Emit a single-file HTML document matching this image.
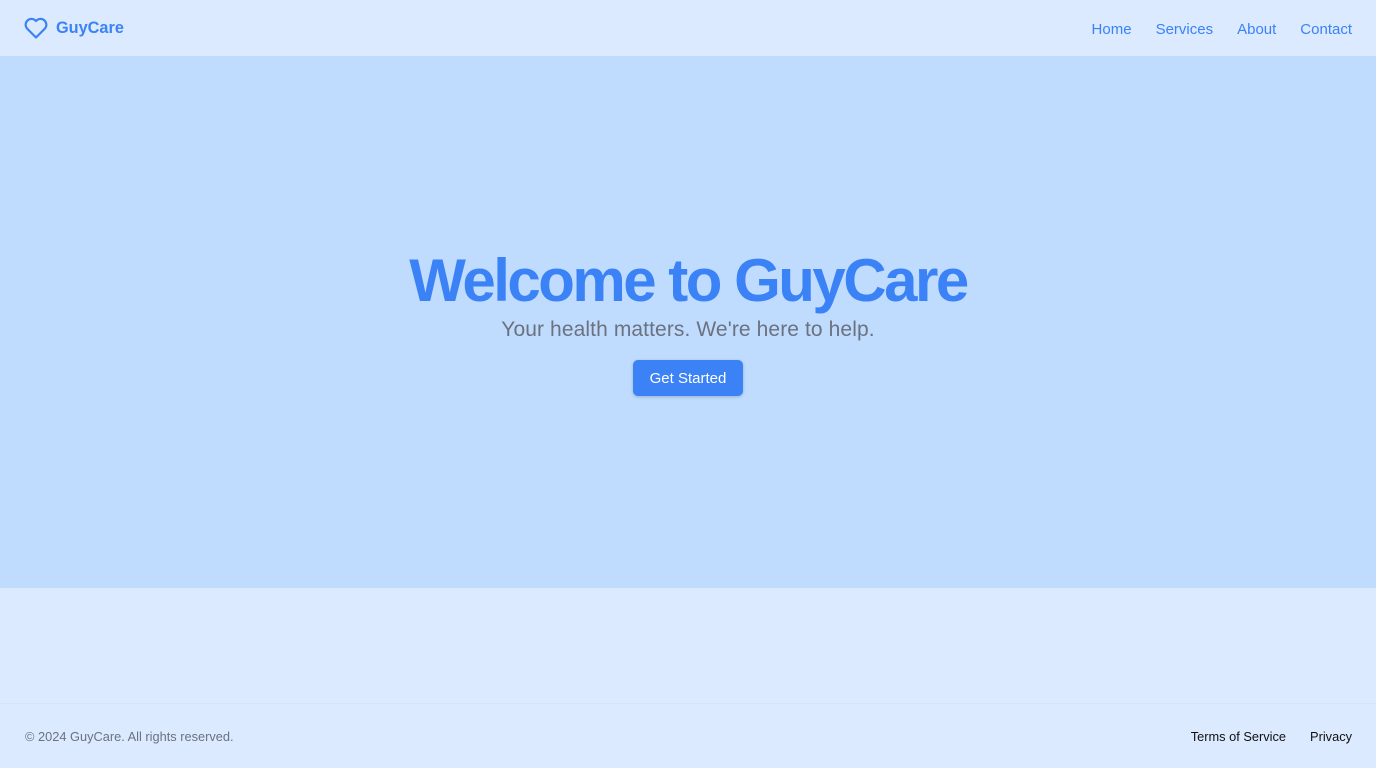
<!DOCTYPE html>
<html><head><style>
*{margin:0;padding:0;box-sizing:border-box}
body{width:1376px;height:768px;background:#dbeafe;font-family:"Liberation Sans",sans-serif;position:relative;overflow:hidden}
header{height:56px;display:flex;align-items:center;justify-content:space-between;padding:0 24px}
.logo{display:flex;align-items:center;gap:8px;color:#3b82f6;font-weight:bold;font-size:16.3px}
nav{padding-top:3px}
nav a{color:#3b82f6;text-decoration:none;font-size:15px;margin-left:24px}
.hero{position:absolute;top:56px;left:0;width:1376px;height:532px;background:#bfdbfe;text-align:center}
h1{position:absolute;top:190px;width:100%;font-size:60px;letter-spacing:-2.5px;color:#3b82f6;font-weight:bold}
.sub{position:absolute;top:262px;width:100%;font-size:21px;color:#6b7280;letter-spacing:0.1px}
.btn{position:absolute;top:304px;left:633px;width:110px;height:36px;background:#3b82f6;color:#fff;border-radius:5px;font-size:15px;line-height:38px;box-shadow:0 1px 3px rgba(0,0,0,.2)}
footer{position:absolute;top:703px;left:0;width:1376px;height:65px;border-top:1px solid #d6e4fb;display:flex;align-items:center;justify-content:space-between;padding:0 24px 0 25px;font-size:12.8px}
.c{color:#6b7280}
footer a{color:#111;text-decoration:none;margin-left:24px}
</style></head><body>
<header><div class="logo"><svg width="24" height="22" viewBox="0 0 24 22" fill="none" stroke="#3b82f6" stroke-width="2.2" stroke-linejoin="round"><path d="M12 20.5 L3 11.5 A5.2 5.2 0 0 1 12 4 A5.2 5.2 0 0 1 21 11.5 Z"/></svg>GuyCare</div>
<nav><a>Home</a><a>Services</a><a>About</a><a>Contact</a></nav></header>
<div class="hero"><h1>Welcome to GuyCare</h1><div class="sub">Your health matters. We're here to help.</div><div class="btn">Get Started</div></div>
<footer><span class="c">© 2024 GuyCare. All rights reserved.</span><span><a>Terms of Service</a><a>Privacy</a></span></footer>
</body></html>
